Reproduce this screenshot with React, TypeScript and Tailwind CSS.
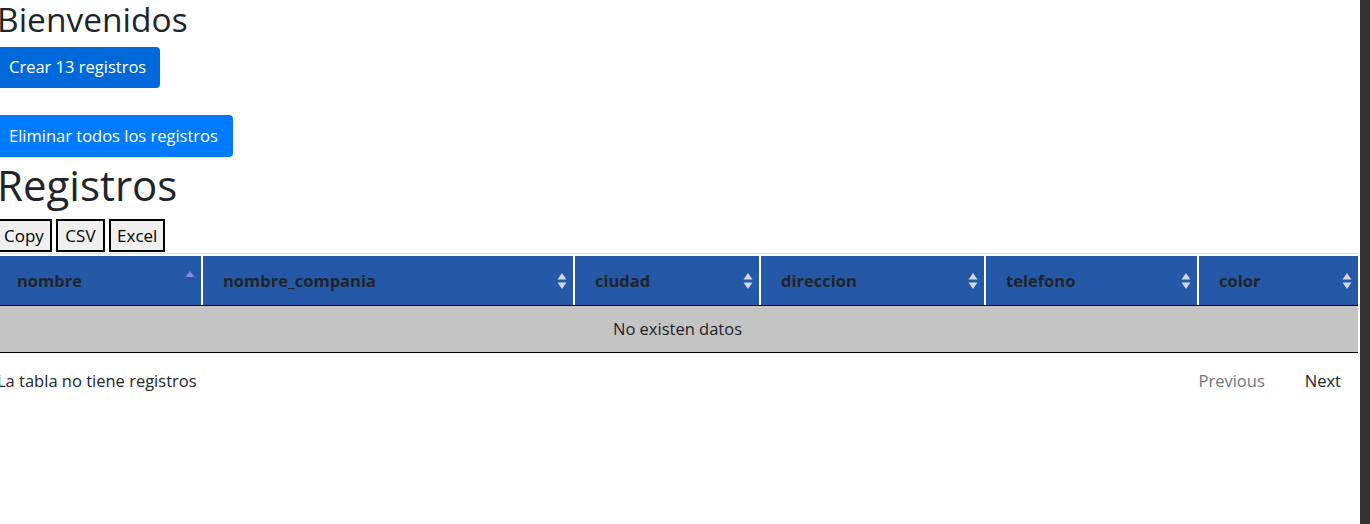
const columns = [
  { name: "nombre", width: "w-[204px]", sorted: true },
  { name: "nombre_compania", width: "w-[370px]" },
  { name: "ciudad", width: "w-[184px]" },
  { name: "direccion", width: "w-[223px]" },
  { name: "telefono", width: "w-[211px]" },
  { name: "color", width: "w-[159px]" },
];

function SortIcon({ sorted }: { sorted?: boolean }) {
  if (sorted) {
    return (
      <svg width="10" height="16" viewBox="0 0 10 16" className="shrink-0">
        <path d="M5 3 L9.5 9 L0.5 9 Z" fill="#8a86e6" />
      </svg>
    );
  }
  return (
    <svg width="10" height="18" viewBox="0 0 10 18" className="shrink-0">
      <path d="M5 1 L9.5 7.5 L0.5 7.5 Z" fill="#d4d8e4" />
      <path d="M5 17 L9.5 10.5 L0.5 10.5 Z" fill="#d4d8e4" />
    </svg>
  );
}

const btnLight =
  "border-2 border-black bg-[#efefef] h-[33px] text-[17px] leading-none text-black";

export default function App() {
  return (
    <div className="flex h-screen w-full overflow-hidden bg-white font-['Open_Sans',sans-serif] text-[#212529]">
      <main className="min-w-0 flex-1 overflow-hidden">
        <div className="-ml-[3px] w-[1361px]">
          <h1 className="h-[44px] text-[33.5px] font-medium leading-[38px]">Bienvenidos</h1>
          <button className="mt-[3px] h-[41px] rounded-r-[4px] bg-[#0069d9] pl-[12px] pr-[14px] text-[16.5px] text-white">
            Crear 13 registros
          </button>
          <div className="h-[27px]" />
          <button className="block h-[42px] rounded-r-[4px] bg-[#007bff] pl-[12px] pr-[15px] text-[16.5px] text-white">
            Eliminar todos los registros
          </button>
          <h2 className="mt-[3px] h-[52px] text-[42px] font-medium leading-[50px]">Registros</h2>
          <div className="mt-[7px] flex gap-[4px]">
            <button className={`${btnLight} pl-[5px] pr-[6px]`}>Copy</button>
            <button className={`${btnLight} px-[7.5px]`}>CSV</button>
            <button className={`${btnLight} px-[6px]`}>Excel</button>
          </div>
          <div className="mt-px border-t border-[#dddddd]">
            <div className="mt-[2px] flex gap-[2px] border-b border-black">
              {columns.map((c) => (
                <div
                  key={c.name}
                  className={`${c.width} flex h-[49px] items-center justify-between bg-[#2559a8] pl-[20px] pr-[6px]`}
                >
                  <span className="mt-[2px] text-[16.5px] font-bold text-[#212529]">{c.name}</span>
                  <span className={c.sorted ? "-mt-[10px]" : ""}>
                    <SortIcon sorted={c.sorted} />
                  </span>
                </div>
              ))}
            </div>
            <div className="flex h-[47px] items-center justify-center border-b border-black bg-[#c4c4c4] text-[16.5px]">
              No existen datos
            </div>
          </div>
          <div className="flex items-center justify-between pt-[10px] text-[16.5px]">
            <span>La tabla no tiene registros</span>
            <div className="flex items-center pr-[1px]">
              <span className="mr-[8px] px-[16px] py-[6px] text-[#6c757d]">Previous</span>
              <span className="px-[16px] py-[6px] text-[#212529]">Next</span>
            </div>
          </div>
        </div>
      </main>
      <aside className="h-full w-[10px] shrink-0 bg-[#333333]" />
    </div>
  );
}
